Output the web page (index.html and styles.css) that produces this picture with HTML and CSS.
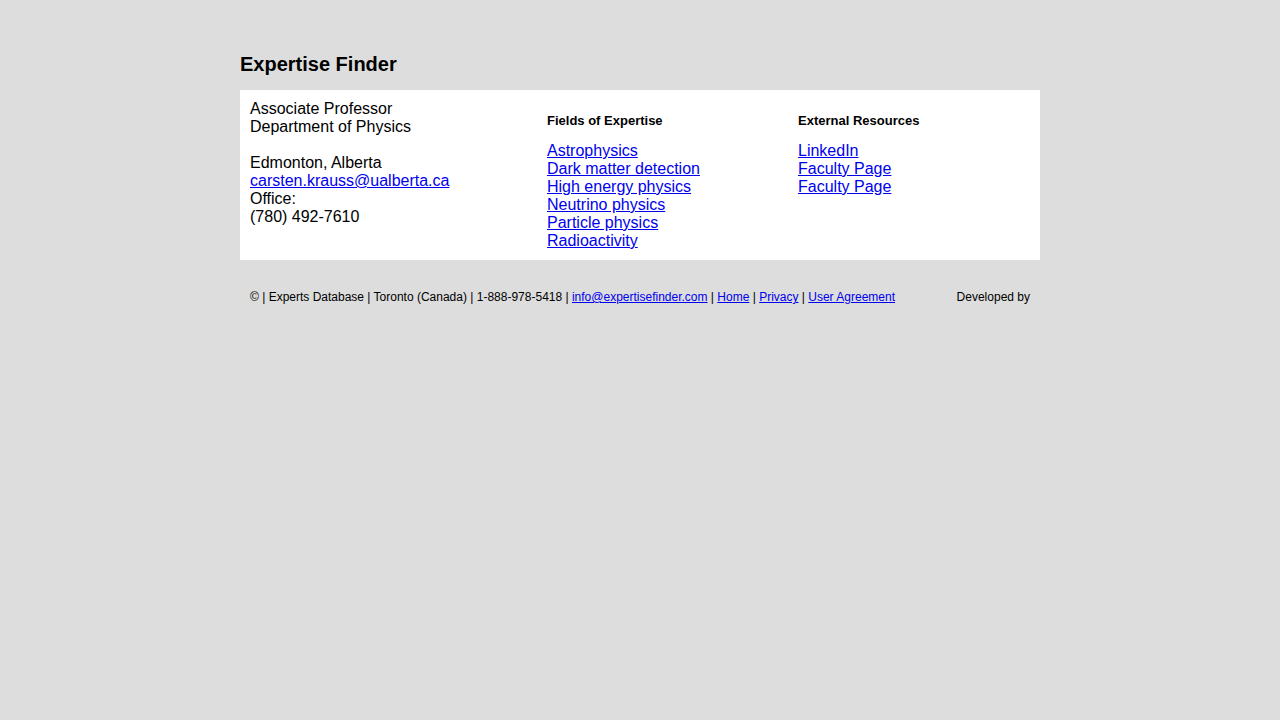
FILE: index.html
```html
<!DOCTYPE html>
<html lang="en">
<head>
<meta charset="utf-8">
<title>Expertise Finder</title>
<link rel="stylesheet" href="styles.css">
</head>
<body>
<div class="wrap">
  <h1 class="title">Expertise Finder</h1>
  <div class="card">
    <div class="col col-info">
      <div class="block">Associate Professor<br>Department of Physics</div>
      <div class="block">Edmonton, Alberta<br><a href="#">carsten.krauss@ualberta.ca</a><br>Office:<br>(780) 492-7610</div>
    </div>
    <div class="col">
      <h4 class="col-head">Fields of Expertise</h4>
      <ul class="links">
        <li><a href="#">Astrophysics</a></li>
        <li><a href="#">Dark matter detection</a></li>
        <li><a href="#">High energy physics</a></li>
        <li><a href="#">Neutrino physics</a></li>
        <li><a href="#">Particle physics</a></li>
        <li><a href="#">Radioactivity</a></li>
      </ul>
    </div>
    <div class="col">
      <h4 class="col-head">External Resources</h4>
      <ul class="links">
        <li><a href="#">LinkedIn</a></li>
        <li><a href="#">Faculty Page</a></li>
        <li><a href="#">Faculty Page</a></li>
      </ul>
    </div>
  </div>
  <div class="footer">
    <div class="foot-left">© | Experts Database | Toronto (Canada) | 1-888-978-5418 | <a href="#">info@expertisefinder.com</a> | <a href="#">Home</a> | <a href="#">Privacy</a> | <a href="#">User Agreement</a></div>
    <div class="foot-right">Developed by</div>
  </div>
</div>
</body>
</html>
```
FILE: styles.css
```css
html, body {
  margin: 0;
  padding: 0;
  background: #dddddd;
  font-family: "Liberation Sans", Arial, sans-serif;
  color: #000;
}
a { color: #0000ee; text-decoration: underline; }
.wrap {
  width: 800px;
  margin: 0 auto;
  padding-top: 53px;
}
.title {
  margin: 0 0 15px 0;
  font-size: 20px;
  line-height: 22px;
  font-weight: bold;
}
.card {
  background: #fff;
  display: grid;
  grid-template-columns: 297px 251px 252px;
  font-size: 16px;
  line-height: 18px;
}
.col {
  padding: 10px 10px 10px 10px;
}
.block + .block { margin-top: 18px; }
.col-head {
  margin: 13px 0 13px 0;
  font-size: 13px;
  line-height: 16px;
  font-weight: bold;
}
.links {
  list-style: none;
  margin: 0;
  padding: 0;
}
.footer {
  display: flex;
  justify-content: space-between;
  padding: 30px 10px 0 10px;
  font-size: 12px;
  line-height: 15px;
}
```
